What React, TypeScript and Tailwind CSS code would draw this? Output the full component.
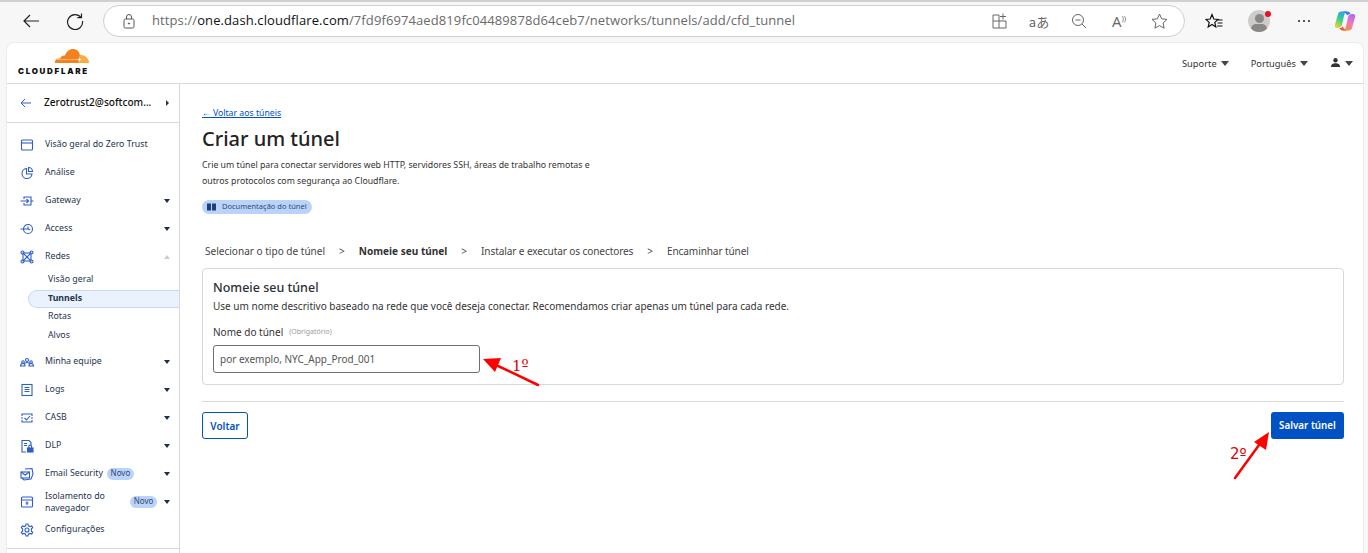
import type { ReactNode } from "react";

const blue = "#2f5fc4";

function NavIcon({ children }: { children: ReactNode }) {
  return (
    <svg width="14" height="14" viewBox="0 0 14 14" fill="none" stroke={blue} strokeWidth="1.100" className="shrink-0">
      {children}
    </svg>
  );
}

function Caret({ up }: { up?: boolean }) {
  return (
    <span
      className={
        up
          ? "w-0 h-0 border-x-[3.5px] border-x-transparent border-b-[4px] border-b-[#c9ced6]"
          : "w-0 h-0 border-x-[3.5px] border-x-transparent border-t-[4px] border-t-[#1d2f4f]"
      }
    />
  );
}

function Novo() {
  return (
    <span className="h-[12px] w-[27px] rounded-full bg-[#b9d3fb] text-[8px] leading-[10px] text-[#33496e] text-center shrink-0">
      Novo
    </span>
  );
}

function NavRow({ icon, label, caret, up, badge }: { icon: ReactNode; label: string; caret?: boolean; up?: boolean; badge?: boolean }) {
  return (
    <div className="h-[28px] flex items-center pl-[13px] pr-[9px]">
      <NavIcon>{icon}</NavIcon>
      <span className="ml-[11px] text-[8.8px] text-[#24344f]">{label}</span>
      {badge && <span className="ml-[4px] flex"><Novo /></span>}
      <span className="flex-1" />
      {caret && <Caret up={up} />}
    </div>
  );
}

function SubRow({ label, active }: { label: string; active?: boolean }) {
  return (
    <div
      className={
        active
          ? "h-[18px] mt-[1px] ml-[21px] pl-[19px] flex items-center text-[8.8px] font-bold text-[#24344f] bg-[#eaf2fe] border border-r-0 border-[#c5d9f8] rounded-l-full"
          : "h-[18.7px] ml-[41px] flex items-center text-[8.8px] text-[#24344f]"
      }
    >
      {label}
    </div>
  );
}

function Sidebar() {
  return (
    <aside className="w-[173px] shrink-0 border-r border-[#d9d9d9] flex flex-col">
      <div className="h-[39px] border-b border-[#d9d9d9] flex items-center pl-[13px] pr-[10px] shrink-0">
        <svg width="12" height="12" viewBox="0 0 12 12" fill="none" stroke={blue} strokeWidth="1">
          <path d="M11 6H1M5 2 1 6l4 4" />
        </svg>
        <span className="ml-[12px] text-[10.1px] font-medium text-[#111] whitespace-nowrap">Zerotrust2@softcom...</span>
        <span className="flex-1" />
        <span className="w-0 h-0 border-y-[3px] border-y-transparent border-l-[3.5px] border-l-[#333]" />
      </div>
      <div className="pt-[8px]">
        <NavRow label="Visão geral do Zero Trust" icon={<><rect x="1.500" y="2" width="11" height="10" rx="1" /><path d="M1.500 5h11" /></>} />
        <NavRow label="Análise" icon={<><path d="M6.500 2.500a5 5 0 1 0 5.500 5.500H6.500z" /><path d="M8.500 1.500A4 4 0 0 1 12.500 5.500H8.500z" /></>} />
        <NavRow label="Gateway" caret icon={<><path d="M4 5V3h7v8H4V9M0.500 7h8M6.500 5l2 2-2 2M11 7h2.500" /></>} />
        <NavRow label="Access" caret icon={<><circle cx="8" cy="7" r="4.500" /><path d="M0.500 7h7.500M8 4.500V7l2 1" /></>} />
        <NavRow label="Redes" caret up icon={<><rect x="3" y="3" width="8" height="8" /><circle cx="2.500" cy="2.500" r="1.500" /><circle cx="11.500" cy="2.500" r="1.500" /><circle cx="2.500" cy="11.500" r="1.500" /><circle cx="11.500" cy="11.500" r="1.500" /><path d="M3.500 10.500 10.500 3.500M3.500 3.500l7 7" /></>} />
        <div className="-mt-[1px] mb-[3px]">
          <SubRow label="Visão geral" />
          <SubRow label="Tunnels" active />
          <SubRow label="Rotas" />
          <SubRow label="Alvos" />
        </div>
        <NavRow label="Minha equipe" caret icon={<><circle cx="3" cy="7" r="1.300" /><circle cx="7" cy="5" r="1.500" /><circle cx="11" cy="7" r="1.300" /><path d="M0.500 11c0-2 1-2.500 2.500-2.500S5 9 5 11zM9 11c0-2 .5-2.500 2-2.500s2.500.5 2.500 2.500zM4.500 9c.5-1 1.500-1.500 2.500-1.500S9 8 9.500 9" /></>} />
        <NavRow label="Logs" caret icon={<><rect x="2" y="1.500" width="10" height="11" /><path d="M4.500 4.500h5M4.500 6.500h5M4.500 8.500h5" /></>} />
        <NavRow label="CASB" caret icon={<><path d="M2 5V3h10v2M2 9v2h10V9M1 7h2M11 7h2" /><path d="m4.500 7 2 2 3.500-4" /></>} />
        <NavRow label="DLP" caret icon={<><path d="M6 13H2V1.500h7l2 2V6" /><path d="M4 4.500h3M4 6.500h3" /><rect x="7.500" y="9" width="5.500" height="4" fill={blue} /><path d="M8.800 9V7.500a1.400 1.400 0 0 1 2.800 0V9" /></>} />
        <NavRow label="Email Security" caret badge icon={<><path d="M5 2 12 1.500 13 7l-2 5-7 1-2-2" /><rect x="1" y="5" width="8.500" height="6" /><path d="m1 5 4.200 3L9.500 5" /></>} />
        <div className="h-[28px] flex items-center pl-[13px] pr-[8px]">
          <NavIcon>
            <rect x="1.500" y="2" width="11" height="10" rx="1" />
            <path d="M1.500 5h11M7 6.500v3.500M5.500 8h3" />
          </NavIcon>
          <span className="ml-[11px] text-[8.8px] leading-[12px] text-[#24344f] w-[85px]">
            Isolamento do
            <br />
            navegador
          </span>
          <Novo />
          <span className="ml-[7px] flex"><Caret /></span>
        </div>
        <NavRow label="Configurações" icon={<><circle cx="7" cy="7" r="2" /><path d="M6 1h2l.4 1.800 1.600.8 1.700-.7 1 1.700L11.400 5.800v2.400l1.300 1.200-1 1.700-1.700-.7-1.600.8L8 13H6l-.4-1.800-1.600-.8-1.700.7-1-1.700 1.300-1.200V5.800L1.300 4.600l1-1.700 1.700.7 1.600-.8z" /></>} />
      </div>
      <div className="mt-[4px] border-t border-[#d9d9d9]" />
    </aside>
  );
}

function ToolSlot({ children }: { children: ReactNode }) {
  return <span className="w-[40px] flex justify-center items-center">{children}</span>;
}

function BrowserBar() {
  return (
    <div className="h-[42px] shrink-0 flex items-center relative">
      <div className="absolute left-0 top-0 h-[2px] w-full bg-[#d0d0d0]" />
      <svg width="18" height="18" viewBox="0 0 18 18" fill="none" stroke="#222" strokeWidth="1.200" className="ml-[22px]">
        <path d="M17 9H2M8 3 2 9l6 6" />
      </svg>
      <svg width="18" height="18" viewBox="0 0 18 18" fill="none" stroke="#222" strokeWidth="1.200" className="ml-[26px]">
        <path d="M15 5.500A7.500 7.500 0 1 0 16.500 9M15.500 1.500v4.200h-4.200" />
      </svg>
      <div className="ml-[19px] w-[1082px] h-[32px] rounded-full border border-[#cfcfcf] bg-white flex items-center pl-[18px] pr-[5px]">
        <svg width="14" height="15" viewBox="0 0 14 15" fill="none" stroke="#555" strokeWidth="1">
          <rect x="2" y="5" width="10" height="9" rx="1.500" />
          <path d="M4.500 5V3a2.500 2.500 0 0 1 5 0v2" />
          <circle cx="7" cy="9.500" r=".6" fill="#555" />
        </svg>
        <span className="ml-[16px] text-[13px] text-[#6a6a6a] font-['Open_Sans',sans-serif] whitespace-nowrap tracking-[0.1px]">
          https://<span className="text-[#111]">one.dash.cloudflare.com</span>/7fd9f6974aed819fc04489878d64ceb7/networks/tunnels/add/cfd_tunnel
        </span>
        <span className="flex-1" />
        <div className="flex items-center text-[#666]">
          <ToolSlot>
            <svg width="16" height="16" viewBox="0 0 16 16" fill="none" stroke="#666" strokeWidth="1">
              <path d="M8 2H2v13h13V8M2 8h13M8 2v13M12 0.500v6M9 3.500h6" />
            </svg>
          </ToolSlot>
          <ToolSlot>
            <span className="text-[13px] leading-none whitespace-nowrap font-['Noto_Sans_CJK_JP',sans-serif]">aあ</span>
          </ToolSlot>
          <ToolSlot>
            <svg width="16" height="16" viewBox="0 0 16 16" fill="none" stroke="#666" strokeWidth="1">
              <circle cx="7" cy="7" r="5.500" />
              <path d="m11 11 4 4M4.500 7h5" />
            </svg>
          </ToolSlot>
          <ToolSlot>
            <span className="text-[15px] leading-none whitespace-nowrap font-['Open_Sans',sans-serif]">A<span className="text-[8px] align-super">))</span></span>
          </ToolSlot>
          <ToolSlot>
            <svg width="17" height="16" viewBox="0 0 17 16" fill="none" stroke="#666" strokeWidth="1">
              <path d="m8.500 1 2.200 4.800 5.300.6-3.900 3.600 1 5.200-4.600-2.600-4.600 2.600 1-5.200L1 6.400l5.300-.6z" />
            </svg>
          </ToolSlot>
        </div>
      </div>
      <svg width="18" height="17" viewBox="0 0 18 17" fill="none" stroke="#111" strokeWidth="1.200" className="ml-[20px]">
        <path d="M7 1.500 8.800 6l4.200.4-3.200 3 1 4.600L7 11.500 3.200 14l1-4.600L1 6.400 5.200 6zM13 7h4.500M12.500 10h5M12 13h5.500" />
      </svg>
      <div className="ml-[25px] relative w-[22px] h-[22px] rounded-full bg-[#cfcdcb] overflow-hidden">
        <div className="mx-auto mt-[4px] w-[9px] h-[9px] rounded-full bg-[#8a8785]" />
        <div className="mx-auto mt-[1px] w-[16px] h-[10px] rounded-full bg-[#8a8785]" />
      </div>
      <div className="absolute left-[1265px] top-[11px] w-[6px] h-[6px] rounded-full bg-[#e81123]" />
      <span className="ml-[28px] flex gap-[3px]">
        <i className="w-[2px] h-[2px] bg-[#222] rounded-full" />
        <i className="w-[2px] h-[2px] bg-[#222] rounded-full" />
        <i className="w-[2px] h-[2px] bg-[#222] rounded-full" />
      </span>
      <svg width="22" height="22" viewBox="0 0 22 22" className="ml-[24px]">
        <defs>
          <linearGradient id="copilotLeft" x1="0.700" y1="0" x2="0.200" y2="1">
            <stop offset="0" stopColor="#2a9df0" />
            <stop offset="0.500" stopColor="#38d38a" />
            <stop offset="1" stopColor="#f5cf3a" />
          </linearGradient>
          <linearGradient id="copilotRight" x1="0.700" y1="0" x2="0.300" y2="1">
            <stop offset="0" stopColor="#b56be8" />
            <stop offset="0.550" stopColor="#f07ac0" />
            <stop offset="1" stopColor="#f4932a" />
          </linearGradient>
        </defs>
        <path d="M7 1.500h6.500c-2 .5-3 2-3.500 4L8 15c-.5 2-2 3-4 3H3c-2 0-2.500-1.500-2-3.500L4 4c.4-1.500 1.500-2.500 3-2.500z" fill="url(#copilotLeft)" />
        <path d="M15 20.500H8.500c2-.5 3-2 3.500-4L14 7c.5-2 2-3 4-3h1c2 0 2.500 1.500 2 3.500L18 18c-.4 1.500-1.500 2.500-3 2.500z" fill="url(#copilotRight)" />
        <path d="M9 1.500h4.500c1.500 0 2.500 1 3 2.500-1.500 0-2.500.5-3 1.500-1-1.500-2.500-3-4.500-4z" fill="#2f80f0" />
        <path d="M13 20.500H8.500c-1.500 0-2.500-1-3-2.500 1.500 0 2.500-.5 3-1.500 1 1.500 2.500 3.500 4.500 4z" fill="#f0583a" />
      </svg>
    </div>
  );
}

function Logo() {
  return (
    <div className="relative w-[72px] h-[32px] shrink-0 mb-[7px]">
      <svg width="36" height="16" viewBox="0 0 36 16" className="absolute left-[36px] top-[4px]">
        <path d="M1 15c-.5-2.500 1.500-4.500 4-4.500.3 0 .7 0 1 .1C7 8 9 7 11 7.500 12.500 3 16 .5 20 1c3.500.4 5.500 3 6 6.500L24.500 15z" fill="#f48120" />
        <path d="M26 7c4.500-.5 9 3 9 8H24z" fill="#faad3f" />
        <path d="M3 11.500h22" stroke="#fbc28a" strokeWidth=".8" />
        <path d="M25.500 9.500l.6 1.500 1.500.6-1.500.6-.6 1.500-.6-1.500-1.500-.6 1.500-.6z" fill="#fff" />
      </svg>
      <span className="absolute left-0 bottom-0 text-[8px] leading-[10px] font-black tracking-[1.7px] text-[#111] font-['Inter',sans-serif] whitespace-nowrap">
        CLOUDFLARE
      </span>
    </div>
  );
}

function TopBar() {
  return (
    <header className="h-[41px] shrink-0 border-b border-[#d9d9d9] flex items-center pl-[11px] pr-[10px]">
      <Logo />
      <span className="flex-1" />
      <div className="flex items-center gap-[4px] text-[9.300px] text-[#333]">
        <span className="mt-[1px]">Suporte</span>
        <span className="w-0 h-0 border-x-[4.500px] border-x-transparent border-t-[5px] border-t-[#444]" />
      </div>
      <div className="ml-[22px] flex items-center gap-[4px] text-[9.300px] text-[#333]">
        <span className="mt-[1px]">Português</span>
        <span className="w-0 h-0 border-x-[4.500px] border-x-transparent border-t-[5px] border-t-[#444]" />
      </div>
      <div className="ml-[23px] flex items-center gap-[5px]">
        <svg width="9" height="9" viewBox="0 0 9 9" fill="#333" className="-mt-[2px]">
          <circle cx="4.500" cy="2.300" r="2.200" />
          <path d="M0 9c0-3 2-3.800 4.500-3.800S9 6 9 9z" />
        </svg>
        <span className="w-0 h-0 border-x-[4.500px] border-x-transparent border-t-[5px] border-t-[#444]" />
      </div>
    </header>
  );
}

function Step({ label, bold, tight }: { label: string; bold?: boolean; tight?: boolean }) {
  if (bold) return <span className="font-bold text-[#333]">{label}</span>;
  return <span className={tight ? "text-[#444] tracking-[-0.1px]" : "text-[#444]"}>{label}</span>;
}

function Main() {
  return (
    <main className="flex-1 min-w-0 pl-[22px] pr-[19px] pt-[24px]">
      <a className="block text-[8.700px] leading-[11px] text-[#0051c3] underline">← Voltar aos túneis</a>
      <h1 className="mt-[6px] text-[20px] leading-[27px] font-medium text-[#222]">Criar um túnel</h1>
      <p className="mt-[5px] text-[8.750px] leading-[16px] text-[#333] w-[395px]">
        Crie um túnel para conectar servidores web HTTP, servidores SSH, áreas de trabalho remotas e outros protocolos com segurança ao Cloudflare.
      </p>
      <div className="mt-[11px] h-[14px] w-[110px] rounded-full bg-[#b9d3fb] flex items-center pl-[5px] text-[7.500px] text-[#33496e]">
        <svg width="9" height="8" viewBox="0 0 9 8" fill="#1d3f7a">
          <path d="M0 .5h4v7H0zM5 .5h4v7H5z" />
        </svg>
        <span className="ml-[6px] whitespace-nowrap">Documentação do túnel</span>
      </div>
      <div className="mt-[30px] h-[16px] pl-[3px] flex items-center gap-[14px] text-[10.050px] whitespace-nowrap">
        <Step label="Selecionar o tipo de túnel" />
        <Step label=">" />
        <Step label="Nomeie seu túnel" bold />
        <Step label=">" />
        <Step label="Instalar e executar os conectores" tight />
        <Step label=">" />
        <Step label="Encaminhar túnel" tight />
      </div>
      <section className="mt-[8px] h-[117px] border border-[#d9d9d9] rounded-[4px] pl-[10px] pt-[11px]">
        <h2 className="text-[12.500px] leading-[16px] font-medium text-[#2a2f36]">Nomeie seu túnel</h2>
        <p className="mt-[4px] text-[10px] leading-[13px] text-[#333]">
          Use um nome descritivo baseado na rede que você deseja conectar. Recomendamos criar apenas um túnel para cada rede.
        </p>
        <div className="mt-[12px] h-[14px] flex items-center text-[10px] text-[#333]">
          Nome do túnel
          <span className="ml-[6px] text-[7px] text-[#9a9a9a]">(Obrigatório)</span>
        </div>
        <div className="mt-[6px] w-[267px] h-[28px] border border-[#6f6f6f] rounded-[3px] pl-[6px] flex items-center text-[10px] text-[#555]">
          por exemplo, NYC_App_Prod_001
        </div>
      </section>
      <div className="mt-[16px] border-t border-[#d9d9d9]" />
      <div className="mt-[10px] flex justify-between items-start">
        <button className="h-[27px] w-[46px] pt-[1px] border border-[#0051c3] rounded-[3px] bg-white text-[10px] font-semibold text-[#0051c3]">
          Voltar
        </button>
        <button className="h-[27px] w-[73px] pt-[2px] rounded-[3px] bg-[#0051c3] text-[9.800px] font-semibold text-white">
          Salvar túnel
        </button>
      </div>
    </main>
  );
}

export default function App() {
  return (
    <div className="relative w-[1368px] h-[553px] overflow-hidden bg-[#f7f7f7] flex flex-col font-['Noto_Sans',sans-serif]">
      <BrowserBar />
      <div className="flex-1 min-h-0 ml-[6px] mr-[4px] bg-white rounded-t-[8px] border-x border-t border-[#ececec] flex flex-col">
        <TopBar />
        <div className="flex-1 min-h-0 flex">
          <Sidebar />
          <Main />
        </div>
      </div>
      {/* setas vermelhas por cima da tela */}
      <svg width="1368" height="553" viewBox="0 0 1368 553" fill="none" className="absolute left-0 top-0 pointer-events-none">
        <path d="M538 385 496 365" stroke="#f00" strokeWidth="2.500" strokeLinecap="round" />
        <path d="M483 359 501 358 495 372z" fill="#f00" />
        <path d="M1235 478 1259 445" stroke="#f00" strokeWidth="2.500" strokeLinecap="round" />
        <path d="M1269 432 1266 450 1254 442z" fill="#f00" />
      </svg>
      <span className="absolute left-[512px] top-[357px] text-[15px] leading-[18px] text-[#e00000] font-['DejaVu_Serif',serif]">1º</span>
      <span className="absolute left-[1230px] top-[445px] text-[15px] leading-[18px] text-[#e00000] font-['DejaVu_Sans',sans-serif]">2º</span>
    </div>
  );
}
